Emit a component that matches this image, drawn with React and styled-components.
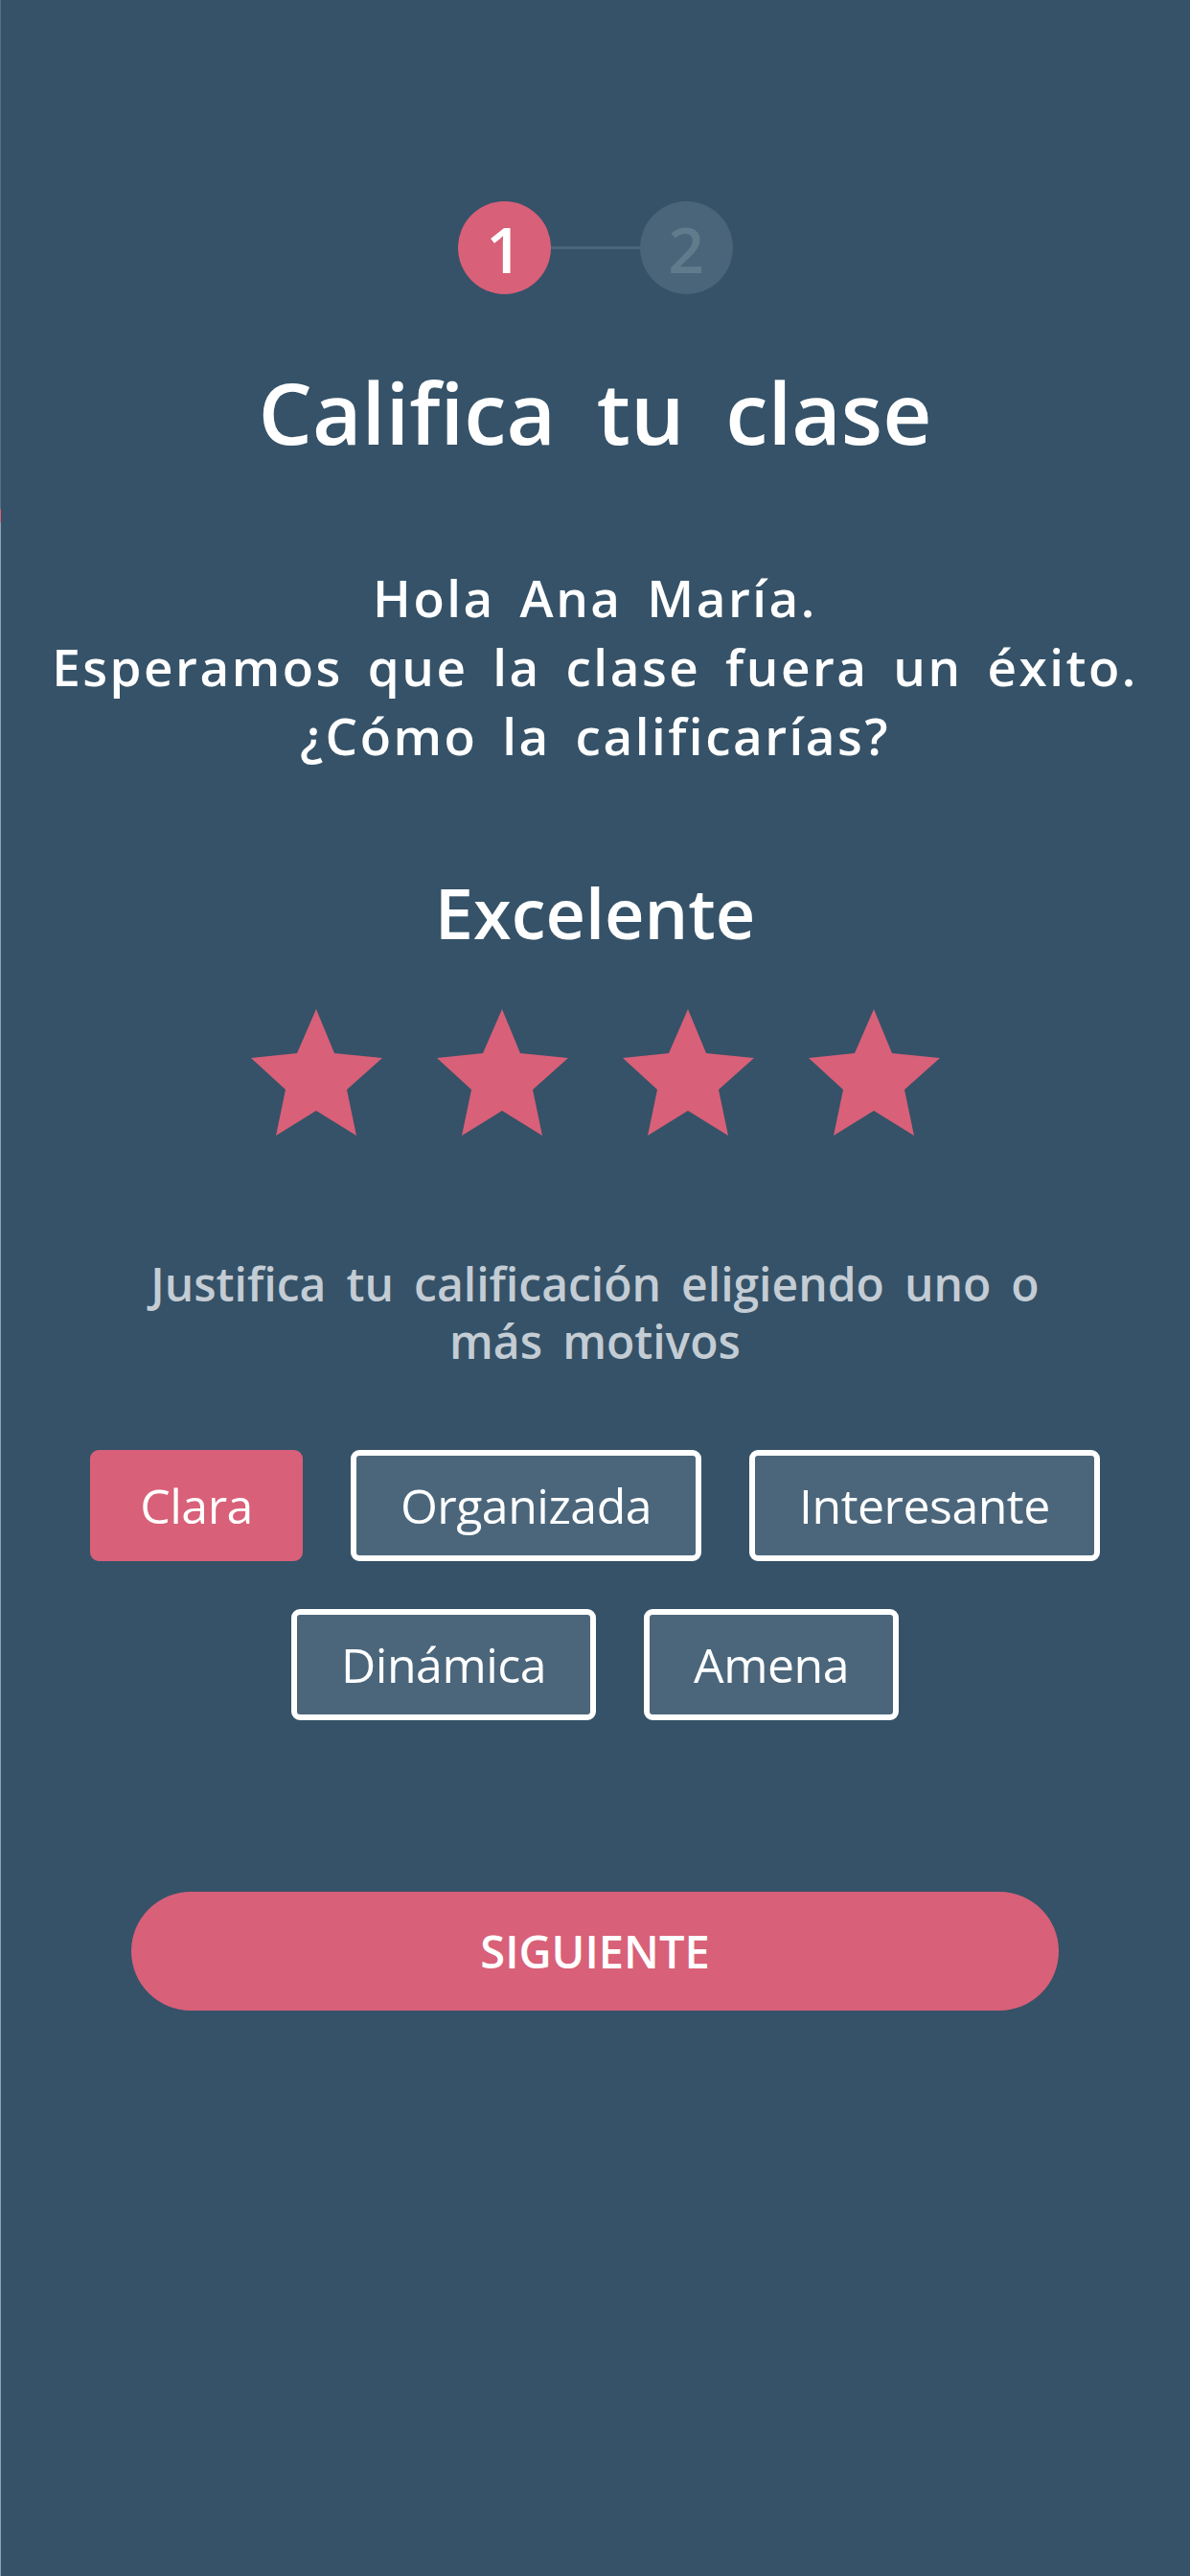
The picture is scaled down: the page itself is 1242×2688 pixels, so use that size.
import React, { useState } from 'react';
import styled, { createGlobalStyle } from 'styled-components';

const GlobalStyle = createGlobalStyle`
  html, body {
    margin: 0;
    padding: 0;
    background: #355268;
  }
  * { box-sizing: border-box; }
`;

const PINK = '#d86078';

const Page = styled.div`
  position: relative;
  width: 1242px;
  min-height: 2688px;
  background: #355268;
  display: flex;
  flex-direction: column;
  align-items: center;
  padding-top: 210px;
  font-family: "Open Sans", "Noto Sans", sans-serif;
  color: #ffffff;

  /* thin edge line on the left side */
  &::before {
    content: '';
    position: absolute;
    left: 0;
    top: 0;
    bottom: 0;
    width: 1px;
    background: linear-gradient(
      to bottom,
      #55708a 0,
      #55708a 531px,
      ${PINK} 531px,
      ${PINK} 545px,
      #8fa2b2 545px
    );
  }
`;

const Stepper = styled.div`
  display: flex;
  align-items: center;
`;

const StepDot = styled.div`
  width: 97px;
  height: 97px;
  border-radius: 50%;
  display: flex;
  align-items: center;
  justify-content: center;
  background: ${p => (p.$active ? PINK : '#4a6479')};
  color: ${p => (p.$active ? '#ffffff' : '#5f7b8c')};
  font-size: 66px;
  font-weight: 600;
  line-height: 1;
`;

const StepLine = styled.div`
  width: 93px;
  height: 3px;
  background: #4a6479;
`;

const Title = styled.h1`
  margin: 78px 0 0;
  font-size: 89px;
  font-weight: 600;
  line-height: 1;
  word-spacing: 0.22em;
  text-align: center;
`;

const Greeting = styled.p`
  margin: 114px 0 0;
  font-size: 53px;
  font-weight: 600;
  line-height: 72px;
  letter-spacing: 2.5px;
  word-spacing: 0.18em;
  text-align: center;
`;

const RatingLabel = styled.h2`
  margin: 112px 0 0;
  font-size: 72px;
  font-weight: 600;
  line-height: 1;
  text-align: center;
`;

const Stars = styled.div`
  margin-top: 65px;
  display: flex;
  gap: 57px;
`;

const StarButton = styled.button`
  border: 0;
  padding: 0;
  background: none;
  width: 137px;
  height: 132px;
  cursor: pointer;
  display: block;

  svg {
    display: block;
    width: 137px;
    height: 132px;
  }
`;

const Prompt = styled.p`
  margin: 125px 0 0;
  font-size: 48px;
  font-weight: 600;
  line-height: 60px;
  word-spacing: 0.18em;
  color: #c4ccd4;
  text-align: center;
`;

const Chips = styled.div`
  margin-top: 83px;
  width: 1140px;
  display: flex;
  flex-wrap: wrap;
  justify-content: center;
  gap: 50px;
`;

const Chip = styled.button`
  height: 116px;
  padding: 0 46px;
  border: 6px solid ${p => (p.$selected ? PINK : '#ffffff')};
  border-radius: 9px;
  background: ${p => (p.$selected ? PINK : '#4b667b')};
  color: #ffffff;
  font-family: "Open Sans", "Noto Sans", sans-serif;
  font-size: 50px;
  font-weight: 400;
  letter-spacing: -0.5px;
  line-height: 1;
  cursor: pointer;
`;

const NextButton = styled.button`
  margin-top: 179px;
  width: 968px;
  height: 124px;
  border: 0;
  border-radius: 62px;
  background: ${PINK};
  color: #ffffff;
  font-family: "Open Sans", "Noto Sans", sans-serif;
  font-size: 47px;
  font-weight: 600;
  line-height: 1;
  cursor: pointer;
`;

const Star = ({ color }) => (
  <svg viewBox="0 0 137 132">
    <polygon
      fill={color}
      points="68,0 87,46 137,51 100,84 110,132 68,106 26,132 36,84 0,51 48,46"
    />
  </svg>
);

const reasons = ['Clara', 'Organizada', 'Interesante', 'Dinámica', 'Amena'];

export default function App() {
  const [rating, setRating] = useState(4);
  const [picked, setPicked] = useState(['Clara']);

  const toggle = r =>
    setPicked(prev => (prev.includes(r) ? prev.filter(x => x !== r) : [...prev, r]));

  return (
    <>
      <GlobalStyle />
      <Page>
        <Stepper>
          <StepDot $active>1</StepDot>
          <StepLine />
          <StepDot>2</StepDot>
        </Stepper>

        <Title>Califica tu clase</Title>

        <Greeting>
          Hola Ana María.
          <br />
          Esperamos que la clase fuera un éxito.
          <br />
          ¿Cómo la calificarías?
        </Greeting>

        <RatingLabel>Excelente</RatingLabel>

        <Stars>
          {[1, 2, 3, 4].map(n => (
            <StarButton key={n} onClick={() => setRating(n)} aria-label={`${n} estrellas`}>
              <Star color={n <= rating ? PINK : '#4a6479'} />
            </StarButton>
          ))}
        </Stars>

        <Prompt>
          Justifica tu calificación eligiendo uno o
          <br />
          más motivos
        </Prompt>

        <Chips>
          {reasons.map(r => (
            <Chip key={r} $selected={picked.includes(r)} onClick={() => toggle(r)}>
              {r}
            </Chip>
          ))}
        </Chips>

        <NextButton>SIGUIENTE</NextButton>
      </Page>
    </>
  );
}
